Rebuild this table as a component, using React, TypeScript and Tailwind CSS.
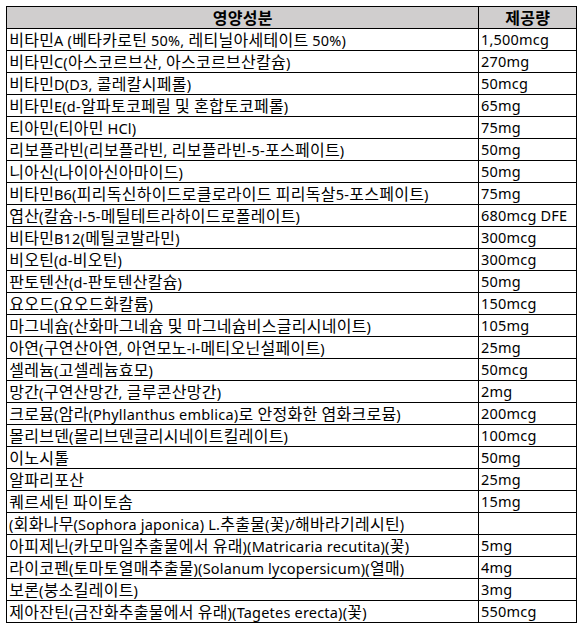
import React from "react";

const rows: [string, string][] = [
  ["비타민A (베타카로틴 50%, 레티닐아세테이트 50%)", "1,500mcg"],
  ["비타민C(아스코르브산, 아스코르브산칼슘)", "270mg"],
  ["비타민D(D3, 콜레칼시페롤)", "50mcg"],
  ["비타민E(d-알파토코페릴 및 혼합토코페롤)", "65mg"],
  ["티아민(티아민 HCl)", "75mg"],
  ["리보플라빈(리보플라빈, 리보플라빈-5-포스페이트)", "50mg"],
  ["니아신(나이아신아마이드)", "50mg"],
  ["비타민B6(피리독신하이드로클로라이드 피리독살5-포스페이트)", "75mg"],
  ["엽산(칼슘-l-5-메틸테트라하이드로폴레이트)", "680mcg DFE"],
  ["비타민B12(메틸코발라민)", "300mcg"],
  ["비오틴(d-비오틴)", "300mcg"],
  ["판토텐산(d-판토텐산칼슘)", "50mg"],
  ["요오드(요오드화칼륨)", "150mcg"],
  ["마그네슘(산화마그네슘 및 마그네슘비스글리시네이트)", "105mg"],
  ["아연(구연산아연, 아연모노-l-메티오닌설페이트)", "25mg"],
  ["셀레늄(고셀레늄효모)", "50mcg"],
  ["망간(구연산망간, 글루콘산망간)", "2mg"],
  ["크로뮴(암라(Phyllanthus emblica)로 안정화한 염화크로뮴)", "200mcg"],
  ["몰리브덴(몰리브덴글리시네이트킬레이트)", "100mcg"],
  ["이노시톨", "50mg"],
  ["알파리포산", "25mg"],
  ["퀘르세틴 파이토솜", "15mg"],
  ["(회화나무(Sophora japonica) L.추출물(꽃)/해바라기레시틴)", ""],
  ["아피제닌(카모마일추출물에서 유래)(Matricaria recutita)(꽃)", "5mg"],
  ["라이코펜(토마토열매추출물)(Solanum lycopersicum)(열매)", "4mg"],
  ["보론(붕소킬레이트)", "3mg"],
  ["제아잔틴(금잔화추출물에서 유래)(Tagetes erecta)(꽃)", "550mcg"],
];

const KR = /[\u3131-\uD79D]/;

function Mixed({ text }: { text: string }) {
  const parts = text.split(/([\u3131-\uD79D]+)/);
  return (
    <>
      {parts.map((p, i) =>
        KR.test(p) ? (
          <span key={i} className="text-[16px]">
            {Array.from(p).map((ch, j) => (
              <span key={j} className="inline-block w-[15px] text-center">
                {ch}
              </span>
            ))}
          </span>
        ) : (
          <span key={i} className="tracking-[0.2px]">
            {p}
          </span>
        )
      )}
    </>
  );
}

export default function App() {
  return (
    <div className="bg-white w-[581px] h-[627px] pt-[6px] pl-[6px] text-black font-['Noto_Sans','Noto_Sans_CJK_KR',sans-serif]">
      <div className="grid grid-cols-[472px_98px] w-[571px] border-l border-t border-black">
        <div className="h-[22px] bg-[#d0cece] border-r border-b border-black flex items-center justify-center text-[14px] font-bold leading-none">
          <span>
            <Mixed text="영양성분" />
          </span>
        </div>
        <div className="h-[22px] bg-[#d0cece] border-r border-b border-black flex items-center justify-center text-[14px] font-bold leading-none">
          <span>
            <Mixed text="제공량" />
          </span>
        </div>
        {rows.map(([a, b], i) => (
          <React.Fragment key={i}>
            <div className="h-[22px] border-r border-b border-black flex items-center pl-[2px] text-[14.5px] leading-none whitespace-nowrap overflow-hidden">
              <span>
                <Mixed text={a} />
              </span>
            </div>
            <div className="h-[22px] border-r border-b border-black flex items-center pl-[2px] text-[14.5px] leading-none whitespace-nowrap overflow-hidden">
              <span>
                <Mixed text={b} />
              </span>
            </div>
          </React.Fragment>
        ))}
      </div>
    </div>
  );
}
